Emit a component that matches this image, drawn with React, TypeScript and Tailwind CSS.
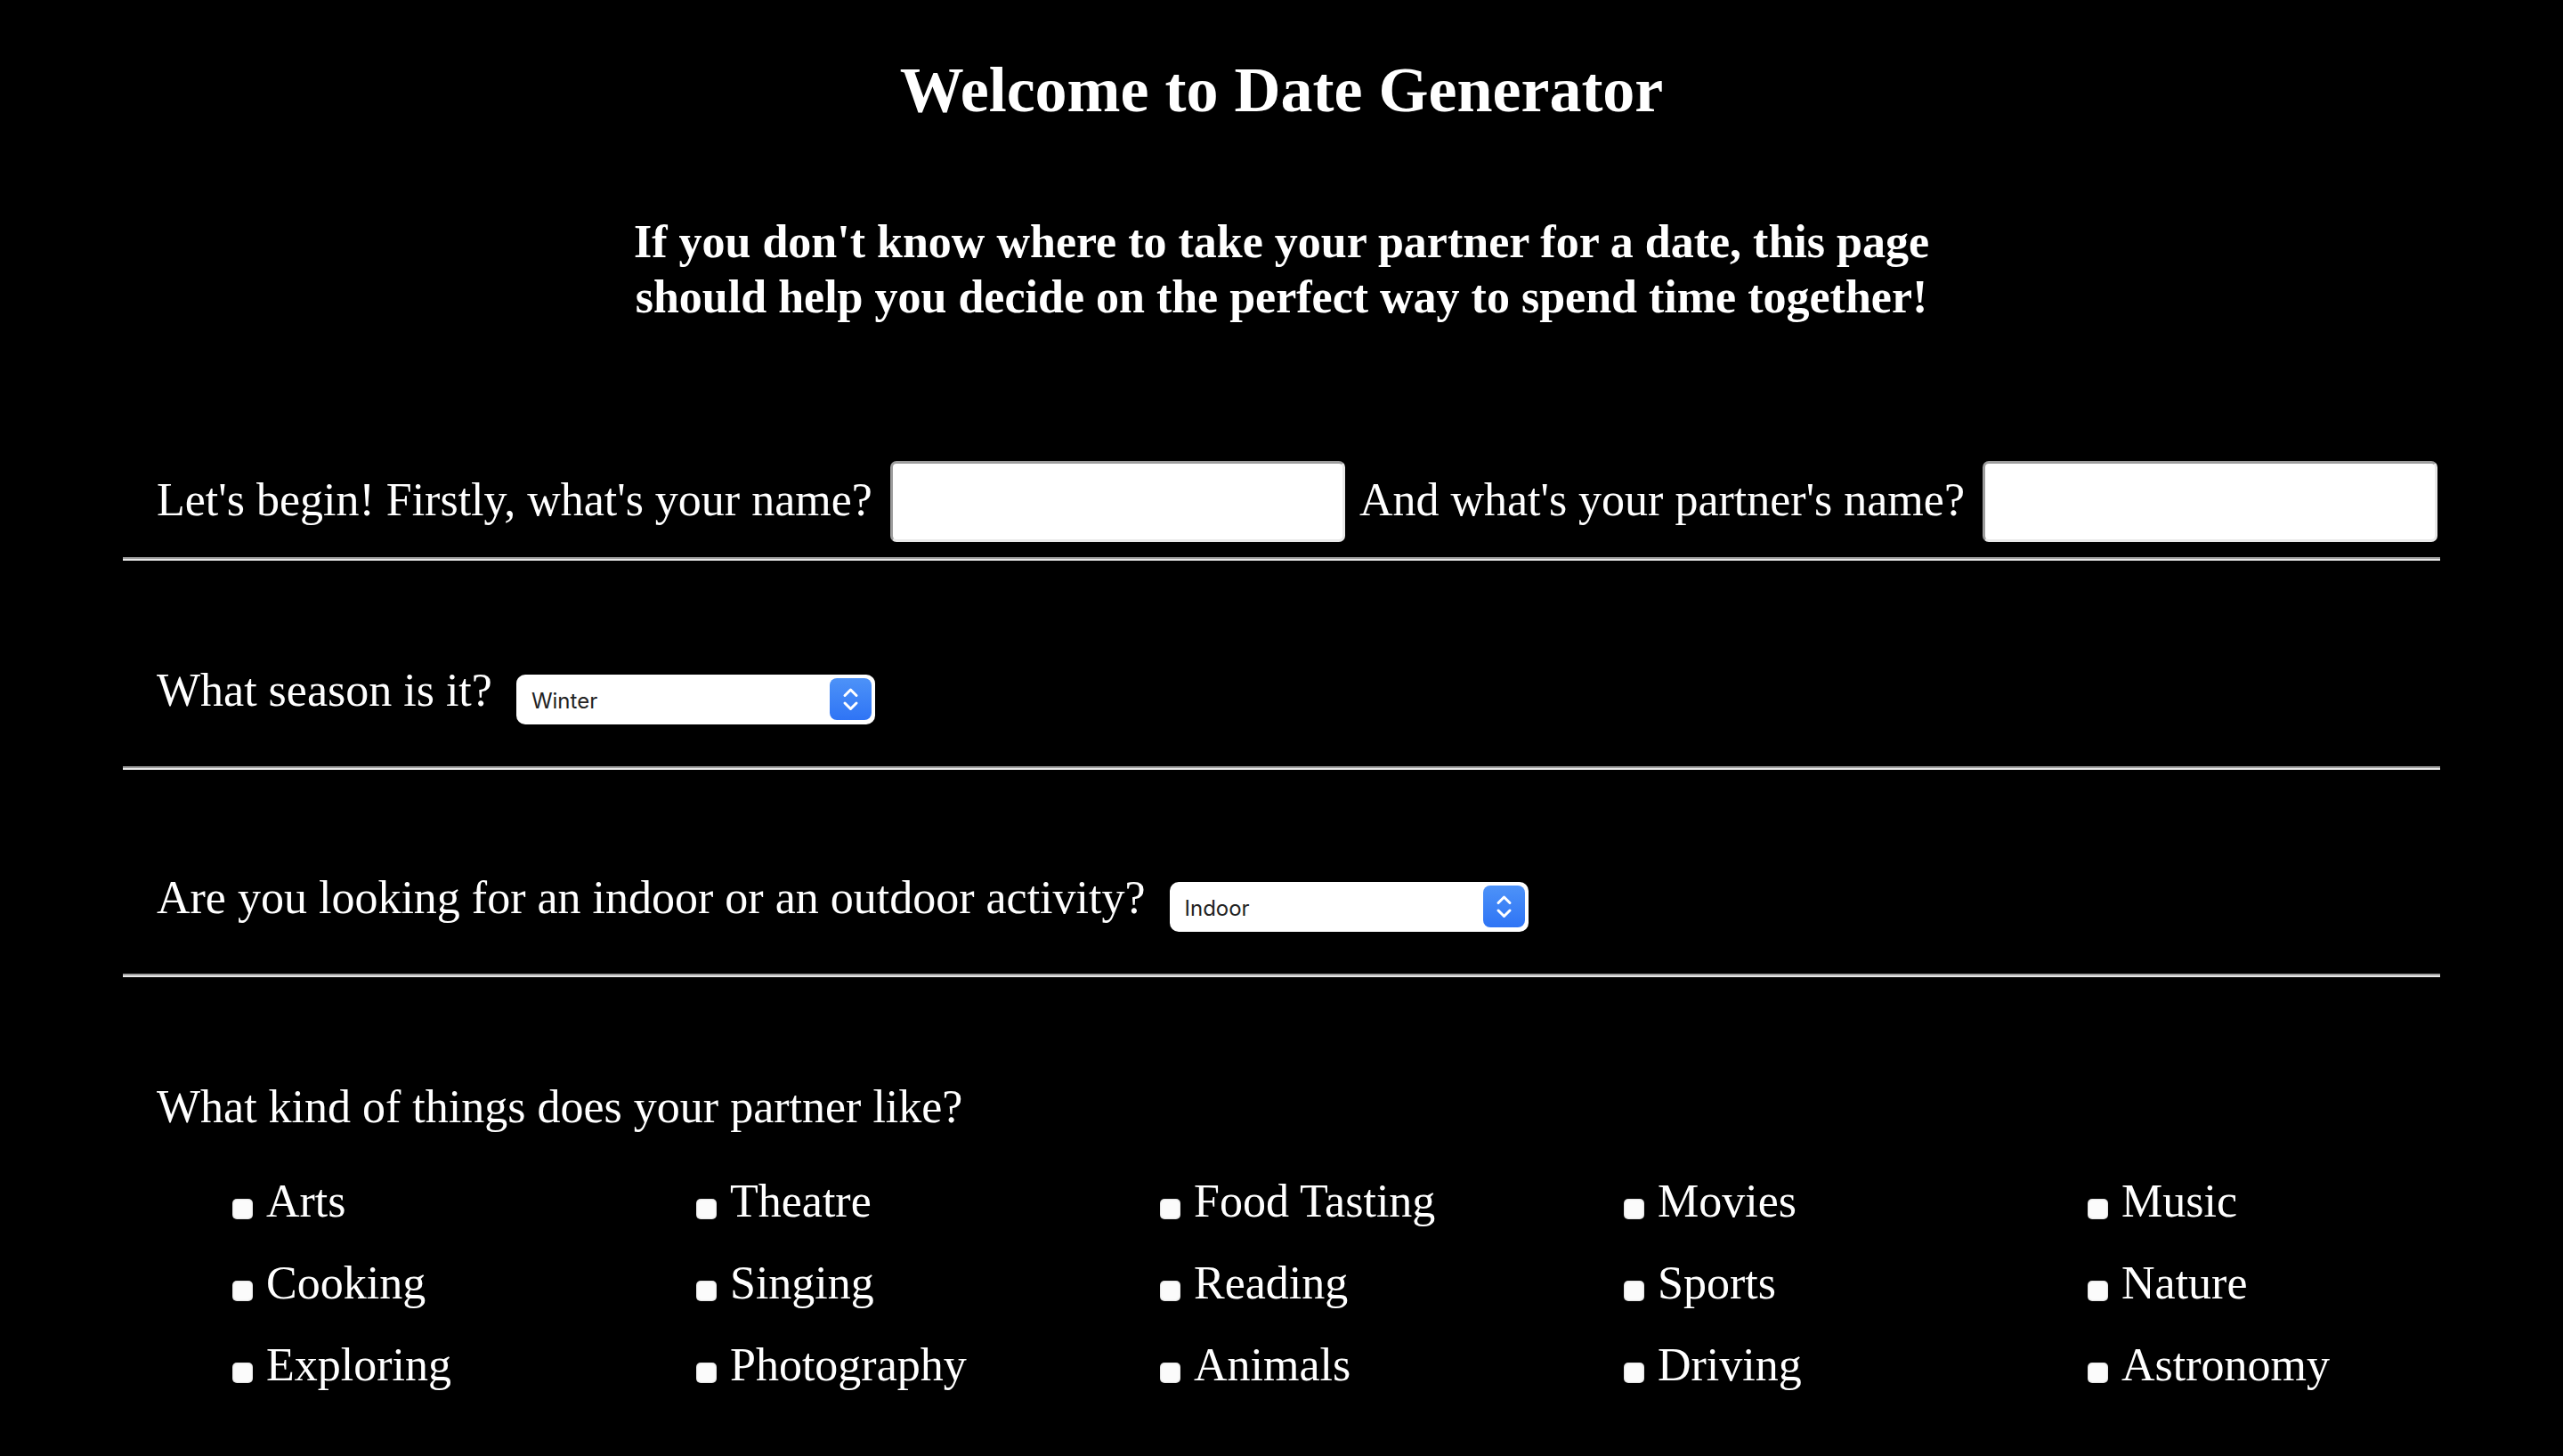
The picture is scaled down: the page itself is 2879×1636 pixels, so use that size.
import React from "react";

const items = [
  "Arts", "Theatre", "Food Tasting", "Movies", "Music",
  "Cooking", "Singing", "Reading", "Sports", "Nature",
  "Exploring", "Photography", "Animals", "Driving", "Astronomy",
];

function Hr() {
  return <div className="h-[4px] border-t-[2px] border-b-[2px] border-t-[#9f9f9f] border-b-[#e8e8e8]" />;
}

function MacSelect({ value, options }: { value: string; options: string[] }) {
  return (
    <div className="relative ml-[27px] mt-[12px] h-[56px] w-[403px] shrink-0">
      <select
        defaultValue={value}
        className="block h-[56px] w-[403px] appearance-none rounded-[10px] bg-white pl-[17px] font-['Inter',sans-serif] text-[24px] text-[#222] outline-none"
      >
        {options.map((o) => (
          <option key={o}>{o}</option>
        ))}
      </select>
      <div className="pointer-events-none absolute right-[4px] top-[4px] h-[47px] w-[47px] rounded-[8px] bg-gradient-to-b from-[#4d92f8] to-[#2f74f5]">
        <svg width="47" height="47" viewBox="0 0 47 47" fill="none">
          <path d="M17 19.5 L23.5 13 L30 19.5" stroke="white" strokeWidth="3" strokeLinecap="round" strokeLinejoin="round" />
          <path d="M17 28 L23.5 34.5 L30 28" stroke="white" strokeWidth="3" strokeLinecap="round" strokeLinejoin="round" />
        </svg>
      </div>
    </div>
  );
}

const inputCls =
  "h-[91px] w-[511px] shrink-0 rounded-[7px] border-[3px] border-t-[#9d9d9d] border-l-[#9d9d9d] border-r-[#e9e9e9] border-b-[#e9e9e9] bg-white outline-none";

export default function App() {
  return (
    <div className="min-h-screen bg-black pb-[56px] font-['Liberation_Serif',serif] text-white">
      <h1 className="pt-[61px] text-center text-[72px] font-bold leading-[80px]">Welcome to Date Generator</h1>
      <p className="mx-auto mt-[100px] max-w-[1500px] text-center text-[52px] font-bold leading-[62px]">
        If you don't know where to take your partner for a date, this page should help you decide on the perfect way to spend time together!
      </p>

      <div className="mx-[138px] mt-[153px]">
        <div className="flex h-[91px] items-center pl-[38px] text-[52px] leading-[60px]">
          <span className="relative top-[-2px] whitespace-nowrap">Let's begin! Firstly, what's your name?</span>
          <input type="text" className={inputCls + " ml-[20px]"} />
          <span className="relative top-[-2px] ml-[16px] whitespace-nowrap">And what's your partner's name?</span>
          <input type="text" className={inputCls + " ml-[20px]"} />
        </div>
        <div className="mt-[17px]">
          <Hr />
        </div>

        <div className="mt-[116px] flex items-start pl-[38px] text-[52px] leading-[60px]">
          <span className="whitespace-nowrap">What season is it?</span>
          <MacSelect value="Winter" options={["Winter", "Spring", "Summer", "Autumn"]} />
        </div>
        <div className="mt-[47px]">
          <Hr />
        </div>

        <div className="mt-[114px] flex items-start pl-[38px] text-[52px] leading-[60px]">
          <span className="whitespace-nowrap">Are you looking for an indoor or an outdoor activity?</span>
          <MacSelect value="Indoor" options={["Indoor", "Outdoor"]} />
        </div>
        <div className="mt-[47px]">
          <Hr />
        </div>

        <div className="mt-[116px] pl-[38px] text-[52px] leading-[60px]">What kind of things does your partner like?</div>
        <div className="mt-[30px] grid grid-cols-[repeat(5,521px)] pl-[123px] text-[52px] leading-[92px]">
          {items.map((it) => (
            <label key={it} className="whitespace-nowrap">
              <input
                type="checkbox"
                className="mr-[15px] inline-block h-[23px] w-[23px] appearance-none rounded-[5px] bg-[#fbfbfb] align-[-3px] shadow-[inset_0_0_2px_rgba(0,0,0,0.35)]"
              />
              {it}
            </label>
          ))}
        </div>
      </div>
    </div>
  );
}
